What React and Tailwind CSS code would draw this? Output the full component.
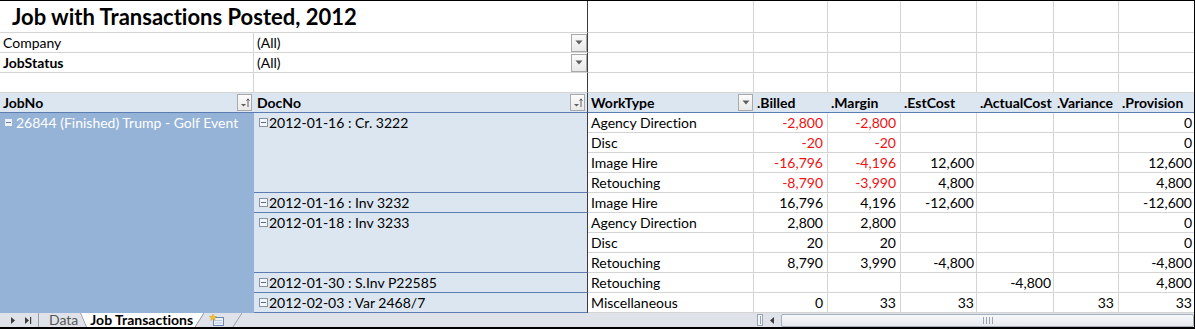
import React from "react";

const GRID = "border-[#d4d4d4]";

function DropBtn({ h = "h-[18px]", w = "w-[16px]" }) {
  return (
    <div className={`${w} ${h} shrink-0 border border-[#a9a9a9] bg-gradient-to-b from-[#fbfbfb] to-[#e9e9e9] flex items-center justify-center`}>
      <svg width="8" height="5" viewBox="0 0 8 5">
        <polygon points="0.5,0.5 7.5,0.5 4,4.5" fill="#5e5e5e" />
      </svg>
    </div>
  );
}

function SortBtn() {
  return (
    <div className="w-[15px] h-[17px] shrink-0 border border-[#a9a9a9] bg-gradient-to-b from-[#fbfbfb] to-[#e9e9e9]">
      <svg width="13" height="15" viewBox="0 0 13 15">
        <polygon points="3,9 8,9 5.5,11.5" fill="#5e5e5e" />
        <line x1="10" y1="4" x2="10" y2="12" stroke="#5e5e5e" strokeWidth="1" />
        <polyline points="8.5,5.8 10,3.8 11.5,5.8" fill="none" stroke="#5e5e5e" strokeWidth="1" />
      </svg>
    </div>
  );
}

function MinusBoxA() {
  return (
    <span className="inline-flex w-[7px] h-[7px] bg-[#eef2f8] items-center justify-center shrink-0">
      <span className="w-[5px] h-[1px] bg-[#6f7f99]" />
    </span>
  );
}

function MinusBoxB() {
  return (
    <span className="inline-flex w-[9px] h-[9px] border border-[#8692a6] bg-[#f3f6fa] items-center justify-center shrink-0">
      <span className="w-[5px] h-[1px] bg-[#5c6a80]" />
    </span>
  );
}

const rows = [
  ["Agency Direction", "-2,800", "-2,800", "", "", "", "0", true],
  ["Disc", "-20", "-20", "", "", "", "0", true],
  ["Image Hire", "-16,796", "-4,196", "12,600", "", "", "12,600", true],
  ["Retouching", "-8,790", "-3,990", "4,800", "", "", "4,800", true],
  ["Image Hire", "16,796", "4,196", "-12,600", "", "", "-12,600", false],
  ["Agency Direction", "2,800", "2,800", "", "", "", "0", false],
  ["Disc", "20", "20", "", "", "", "0", false],
  ["Retouching", "8,790", "3,990", "-4,800", "", "", "-4,800", false],
  ["Retouching", "", "", "", "-4,800", "", "4,800", false],
  ["Miscellaneous", "0", "33", "33", "", "33", "33", false],
];

const docs = [
  { label: "2012-01-16 : Cr. 3222", span: "row-span-4" },
  { label: "2012-01-16 : Inv 3232", span: "row-span-1" },
  { label: "2012-01-18 : Inv 3233", span: "row-span-3" },
  { label: "2012-01-30 : S.Inv P22585", span: "row-span-1" },
  { label: "2012-02-03 : Var 2468/7", span: "row-span-1" },
];
const docStart = { 0: 0, 4: 1, 5: 2, 8: 3, 9: 4 };

const numPad = ["pr-[4px]", "pr-[4px]", "pr-[2px]", "pr-[2px]", "pr-[4px]", "pr-[2px]"];
const numHeads = [".Billed", ".Margin", ".EstCost", ".ActualCost", ".Variance", ".Provision"];

function EmptyCells() {
  return (
    <>
      {Array.from({ length: 7 }).map((_, i) => (
        <div key={i} className={`${i === 6 ? "" : "border-r"} border-b ${GRID}`} />
      ))}
    </>
  );
}

function TabBar() {
  return (
    <div className="h-[14px] flex bg-[#dfe3e9] text-[14px] leading-[14px] shrink-0">
      <div className="w-[38px] flex items-center pl-[11px] gap-[10px]">
        <svg width="4" height="7" viewBox="0 0 4 7">
          <polygon points="0,0 4,3.5 0,7" fill="#3d3d3d" />
        </svg>
        <svg width="7" height="7" viewBox="0 0 7 7">
          <polygon points="0,0 4,3.5 0,7" fill="#3d3d3d" />
          <rect x="5" y="0" width="1.2" height="7" fill="#3d3d3d" />
        </svg>
      </div>
      <div className="h-full border-l border-[#98a1ae] pl-[10px] pr-[2px] text-[#555]">Data</div>
      <svg width="8" height="14" viewBox="0 0 8 14" className="shrink-0">
        <polygon points="0,0 8,0 8,14 6,14" fill="#ffffff" />
        <line x1="0.5" y1="0" x2="6.5" y2="14" stroke="#98a1ae" strokeWidth="1" />
      </svg>
      <div className="h-full bg-white pl-[2px] pr-[1px] font-bold text-black whitespace-nowrap">Job Transactions</div>
      <svg width="10" height="14" viewBox="0 0 10 14" className="shrink-0">
        <polygon points="0,0 10,0 1,14 0,14" fill="#ffffff" />
        <line x1="10" y1="0" x2="1" y2="14" stroke="#8d96a3" strokeWidth="1" />
      </svg>
      <div className="w-[28px] flex items-center pl-[5px] shrink-0">
        <svg width="16" height="13" viewBox="0 0 16 13">
          <rect x="4.5" y="3.5" width="10" height="8" fill="#eaf1fa" stroke="#6b87ad" />
          <line x1="6" y1="6.5" x2="13" y2="6.5" stroke="#b9c9de" />
          <line x1="6" y1="9" x2="13" y2="9" stroke="#b9c9de" />
          <polygon points="4,0 5,2.5 7.5,2.6 5.6,4 6.3,6.5 4,5 1.7,6.5 2.4,4 0.5,2.6 3,2.5" fill="#f4c430" stroke="#d89a10" strokeWidth="0.5" />
        </svg>
      </div>
      <svg width="10" height="14" viewBox="0 0 10 14" className="shrink-0">
        <line x1="10" y1="0" x2="1" y2="14" stroke="#98a1ae" strokeWidth="1" />
      </svg>
      <div className="flex-1" />
      <div className="w-[438px] flex items-center shrink-0">
        <div className="ml-[1px] w-[6px] h-[12px] border border-[#9aa3b0] bg-[#f4f6f9] flex items-center justify-center">
          <span className="w-[1px] h-[8px] bg-[#9aa3b0]" />
        </div>
        <div className="w-[18px] flex items-center justify-center">
          <svg width="4" height="7" viewBox="0 0 4 7">
            <polygon points="4,0 0,3.5 4,7" fill="#3d3d3d" />
          </svg>
        </div>
        <div className="flex-1 h-[13px] border border-[#a5afbd] rounded-[2px] bg-gradient-to-b from-[#f7f8fa] to-[#e6e9ee] flex items-center justify-center gap-[2px]">
          <span className="w-[1px] h-[7px] bg-[#9ba4b1]" />
          <span className="w-[1px] h-[7px] bg-[#9ba4b1]" />
          <span className="w-[1px] h-[7px] bg-[#9ba4b1]" />
          <span className="w-[1px] h-[7px] bg-[#9ba4b1]" />
        </div>
      </div>
    </div>
  );
}

export default function App() {
  return (
    <div className="w-[1195px] h-[329px] bg-white border-t border-r border-b-2 border-black [font-family:Lato,'Open_Sans',sans-serif] [font-variant-ligatures:none] text-[14px] leading-[19px] text-black overflow-hidden flex flex-col">
      <div className="grid grid-cols-[254px_334px_166px_74px_73px_76px_77px_65px_75px] grid-rows-[32px_repeat(14,20px)] shrink-0">
        {/* Title row */}
        <div className={`col-span-2 border-b ${GRID} border-r-[#3c3c3c] border-r flex items-end pl-[12px] pb-[2px]`}>
          <span className="text-[22px] leading-[26px] font-bold whitespace-nowrap">Job with Transactions Posted, 2012</span>
        </div>
        <EmptyCells />

        {/* Company */}
        <div className={`border-r border-b ${GRID} pl-[3px] flex items-center`}>Company</div>
        <div className={`border-r border-b ${GRID} border-r-[#3c3c3c] pl-[3px] flex items-center justify-between`}>
          <span>(All)</span>
          <DropBtn />
        </div>
        <EmptyCells />

        {/* JobStatus */}
        <div className={`border-r border-b ${GRID} pl-[3px] flex items-center font-bold`}>JobStatus</div>
        <div className={`border-r border-b ${GRID} border-r-[#3c3c3c] pl-[3px] flex items-center justify-between`}>
          <span>(All)</span>
          <DropBtn />
        </div>
        <EmptyCells />

        {/* empty */}
        <div className={`border-r border-b ${GRID}`} />
        <div className={`border-r border-b ${GRID} border-r-[#3c3c3c]`} />
        <EmptyCells />

        {/* header row */}
        <div className="bg-[#dce6f1] border-b border-[#5b7db1] pl-[3px] pr-[2px] flex items-center justify-between font-bold">
          <span>JobNo</span>
          <SortBtn />
        </div>
        <div className="bg-[#dce6f1] border-b border-[#5b7db1] border-r border-r-[#3c3c3c] pl-[3px] pr-[2px] flex items-center justify-between font-bold">
          <span>DocNo</span>
          <SortBtn />
        </div>
        <div className="bg-[#dce6f1] border-b border-[#5b7db1] pl-[3px] pr-[1px] flex items-center justify-between font-bold">
          <span>WorkType</span>
          <div className="w-[15px] h-[17px] shrink-0 border border-[#a9a9a9] bg-gradient-to-b from-[#fbfbfb] to-[#e9e9e9] flex items-center justify-center">
            <svg width="8" height="5" viewBox="0 0 8 5">
              <polygon points="0.5,0.5 7.5,0.5 4,4.5" fill="#5e5e5e" />
            </svg>
          </div>
        </div>
        {numHeads.map((h) => (
          <div key={h} className="bg-[#dce6f1] border-b border-[#5b7db1] pl-[3px] flex items-center font-bold whitespace-nowrap overflow-hidden">
            {h}
          </div>
        ))}

        {/* data rows */}
        {rows.map((r, i) => (
          <React.Fragment key={i}>
            {i === 0 && (
              <div className="row-span-10 bg-[#95b3d7] text-white pl-[5px] flex items-start">
                <div className="h-[19px] flex items-center gap-[4px] whitespace-nowrap">
                  <MinusBoxA />
                  <span>26844 (Finished) Trump - Golf Event</span>
                </div>
              </div>
            )}
            {docStart[i] !== undefined && (
              <div className={`${docs[docStart[i]].span} bg-[#dce6f1] border-b border-[#5b7db1] border-r border-r-[#3c3c3c] pl-[5px] flex items-start`}>
                <div className="h-[19px] flex items-center gap-[1px] whitespace-nowrap">
                  <MinusBoxB />
                  <span>{docs[docStart[i]].label}</span>
                </div>
              </div>
            )}
            <div className={`border-r border-b ${GRID} pl-[3px] flex items-center whitespace-nowrap`}>{r[0]}</div>
            {r.slice(1, 7).map((v, j) => (
              <div
                key={j}
                className={`${j === 5 ? "" : "border-r"} border-b ${GRID} ${numPad[j]} flex items-center justify-end whitespace-nowrap ${r[7] && (j === 0 || j === 1) ? "text-[#ee1111]" : ""}`}
              >
                {v}
              </div>
            ))}
          </React.Fragment>
        ))}
      </div>
      <TabBar />
    </div>
  );
}
